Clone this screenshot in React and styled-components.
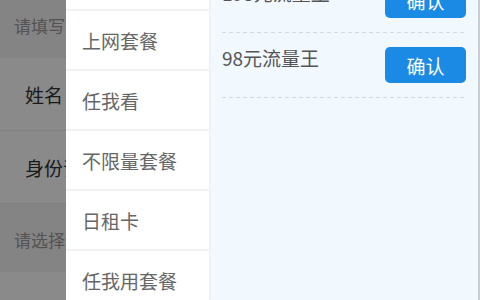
import React from "react";
import styled, { createGlobalStyle } from "styled-components";

const GlobalStyle = createGlobalStyle`
  html, body {
    margin: 0;
    padding: 0;
    width: 480px;
    height: 300px;
    overflow: hidden;
    background: #ffffff;
    font-family: "Noto Sans CJK SC", "Noto Sans", sans-serif;
  }
`;

const categories = ["热门推荐", "上网套餐", "任我看", "不限量套餐", "日租卡", "任我用套餐"];
const plans = ["198元流量王", "98元流量王"];

const App = () => {
  return (
    <Page>
      <GlobalStyle />
      <Form>
        <SectionTitle>请填写入网信息</SectionTitle>
        <Field>姓名</Field>
        <Field>身份证号</Field>
        <SectionTitle>请选择套餐</SectionTitle>
        <Field>套餐</Field>
      </Form>
      <Mask />
      <Sheet>
        <Menu>
          <MenuList>
            {categories.map((c) => (
              <MenuItem key={c}>{c}</MenuItem>
            ))}
          </MenuList>
        </Menu>
        <Plans>
          <PlanList>
            {plans.map((p) => (
              <Plan key={p}>
                <PlanName>{p}</PlanName>
                <ConfirmButton>确认</ConfirmButton>
              </Plan>
            ))}
          </PlanList>
        </Plans>
      </Sheet>
    </Page>
  );
};

export default App;

const Page = styled.div`
  position: relative;
  width: 480px;
  height: 300px;
  overflow: hidden;
`;

const Form = styled.div`
  display: flex;
  flex-direction: column;
  margin-top: -10px;
`;

const SectionTitle = styled.div`
  height: 68px;
  box-sizing: border-box;
  padding: 26px 14px 0;
  line-height: 20px;
  font-size: 17px;
  color: #999;
  background: #f4f4f4;
`;

const Field = styled.div`
  height: 73px;
  box-sizing: border-box;
  display: flex;
  align-items: center;
  padding-left: 25px;
  font-size: 19px;
  color: #333;
  background: #fff;
  border-bottom: 1px solid #ececec;
`;

const Mask = styled.div`
  position: absolute;
  inset: 0;
  background: rgba(0, 0, 0, 0.46);
`;

const Sheet = styled.div`
  position: absolute;
  top: 0;
  left: 66px;
  right: 0;
  bottom: 0;
  display: flex;
`;

const Menu = styled.div`
  width: 143px;
  background: #f2f2f2;
  overflow: hidden;
`;

const MenuList = styled.div`
  display: flex;
  flex-direction: column;
  gap: 2px;
  margin-top: -49px;
`;

const MenuItem = styled.div`
  height: 58px;
  display: flex;
  align-items: center;
  padding-left: 16px;
  background: #fff;
  font-size: 19px;
  color: #666;
`;

const Plans = styled.div`
  flex: 1;
  background: #f1f8fe;
  padding: 0 12px 0 13px;
  border-right: 2px solid #c9cdd1;
  box-shadow: inset 3px 0 3px -2px rgba(0, 0, 0, 0.05);
  overflow: hidden;
`;

const PlanList = styled.div`
  display: flex;
  flex-direction: column;
  margin-top: -32px;
`;

const Plan = styled.div`
  display: flex;
  justify-content: space-between;
  align-items: flex-start;
  padding: 14px 0 15px;
  background: repeating-linear-gradient(
      to right,
      #d3d9e0 0 4px,
      transparent 4px 7px
    )
    bottom / 100% 1px no-repeat;
`;

const PlanName = styled.div`
  font-size: 19px;
  line-height: 22px;
  color: #555;
`;

const ConfirmButton = styled.button`
  width: 81px;
  height: 36px;
  border: none;
  border-radius: 5px;
  background: #1b8ae5;
  color: #fff;
  font-family: "Noto Sans CJK SC", "Noto Sans", sans-serif;
  font-size: 19px;
  padding: 0;
  cursor: pointer;
`;
